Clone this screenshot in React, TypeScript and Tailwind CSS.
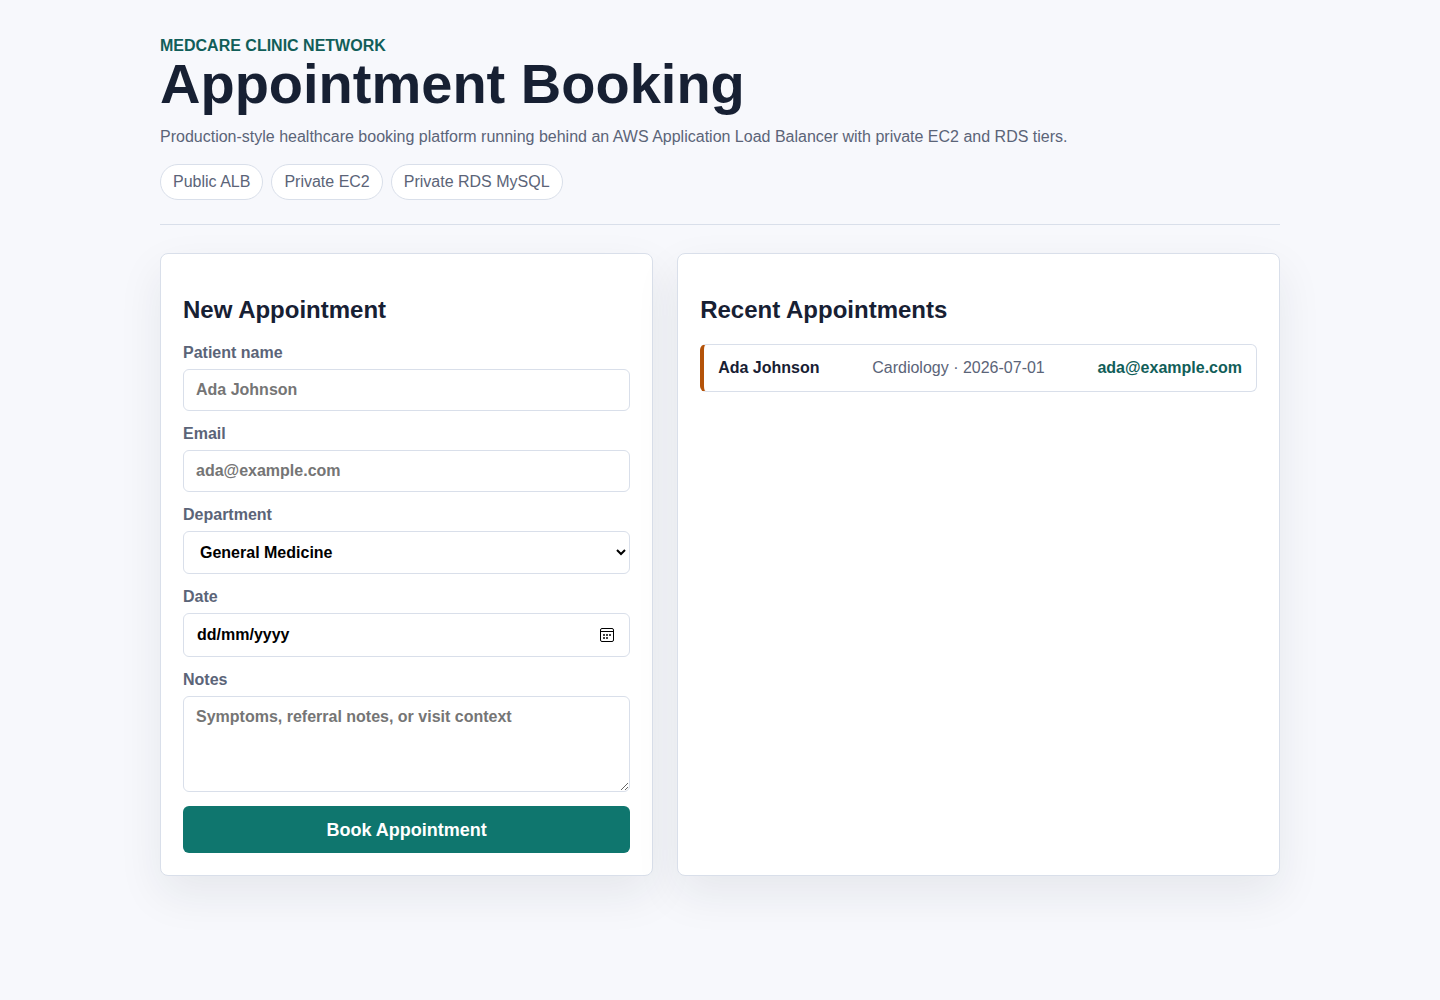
import React from 'react';

interface Appointment {
    name: string;
    department: string;
    date: string;
    email: string;
}

const tiers = ['Public ALB', 'Private EC2', 'Private RDS MySQL'];

const departments = ['General Medicine', 'Cardiology', 'Pediatrics', 'Dermatology'];

const appointments: Appointment[] = [
    { name: 'Ada Johnson', department: 'Cardiology', date: '2026-07-01', email: 'ada@example.com' },
];

const labelClass = 'grid gap-[7px] leading-[18px] font-bold text-[#5b6478]';
const fieldClass = 'w-full rounded-md border border-[#d9dfea] bg-white text-base font-bold text-black';
const cardClass = 'rounded-lg border border-[#d9dfea] bg-white p-[22px] shadow-[0_18px_45px_rgba(24,32,51,0.08)]';

function CalendarIcon() {
    return (
        <svg width="14" height="14" viewBox="0 0 14 14" fill="none" aria-hidden="true" shapeRendering="crispEdges">
            <rect x="0.5" y="0.5" width="13" height="13" rx="1.5" stroke="black" shapeRendering="auto" />
            <path d="M1 3.5h12" stroke="black" />
            <path d="M3 6h2v2H3zM6 6h2v2H6zM9 6h2v2H9zM3 9h2v2H3zM6 9h2v2H6z" fill="#444" />
        </svg>
    );
}

function AppointmentForm() {
    return (
        <section className={cardClass}>
            <h2 className="my-5 text-2xl leading-7 font-bold">New Appointment</h2>
            <form className="grid gap-[14px]" onSubmit={(e) => e.preventDefault()}>
                <label className={labelClass}>
                    Patient name
                    <input
                        type="text"
                        name="patient"
                        placeholder="Ada Johnson"
                        className={`${fieldClass} h-[42px] px-3 placeholder:text-[#757575]`}
                    />
                </label>
                <label className={labelClass}>
                    Email
                    <input
                        type="email"
                        name="email"
                        placeholder="ada@example.com"
                        className={`${fieldClass} h-[42px] px-3 placeholder:text-[#757575]`}
                    />
                </label>
                <label className={labelClass}>
                    Department
                    <select name="department" className={`${fieldClass} h-[43px] px-3`}>
                        {departments.map((department) => (
                            <option key={department}>{department}</option>
                        ))}
                    </select>
                </label>
                <div className={labelClass}>
                    <label htmlFor="date">Date</label>
                    <div className="relative">
                        <input
                            type="text"
                            id="date"
                            name="date"
                            inputMode="numeric"
                            placeholder="dd/mm/yyyy"
                            className={`${fieldClass} block h-11 pr-10 pl-[13px] placeholder:text-black`}
                        />
                        <button
                            type="button"
                            aria-label="Open calendar"
                            className="absolute inset-y-0 right-4 flex items-center"
                        >
                            <CalendarIcon />
                        </button>
                    </div>
                </div>
                <label className={labelClass}>
                    Notes
                    <textarea
                        name="notes"
                        placeholder="Symptoms, referral notes, or visit context"
                        className={`${fieldClass} block h-24 resize-y px-3 py-[11px] leading-[18px] placeholder:text-[#757575]`}
                    />
                </label>
                <button type="submit" className="h-[47px] rounded-md bg-[#0f766e] text-lg font-extrabold text-white">
                    Book Appointment
                </button>
            </form>
        </section>
    );
}

function RecentAppointments() {
    return (
        <section className={cardClass}>
            <h2 className="my-5 text-2xl leading-7 font-bold">Recent Appointments</h2>
            <div className="grid gap-3">
                {appointments.map((item) => (
                    <article
                        key={item.email}
                        className="flex items-center justify-between gap-3 rounded-md border border-l-4 border-[#d9dfea] border-l-[#b45309] p-[14px] leading-[18px]"
                    >
                        <strong>{item.name}</strong>
                        <span className="text-[#5b6478]">
                            {item.department} · {item.date}
                        </span>
                        <span className="font-bold text-[#115e59]">{item.email}</span>
                    </article>
                ))}
            </div>
        </section>
    );
}

export default function App() {
    return (
        <div className="min-h-screen bg-[#f7f8fc] font-['Liberation_Sans',Arial,sans-serif] text-base text-[#172033]">
            <main className="mx-auto max-w-[1184px] px-8 pt-[37px] pb-8">
                <header className="border-b border-[#d9dfea] pb-6">
                    <p className="leading-[18px] font-bold text-[#115e59] uppercase">MedCare Clinic Network</p>
                    <h1 className="text-[56px] leading-[58px] font-bold">Appointment Booking</h1>
                    <p className="mt-[15px] leading-[18px] text-[#5b6478]">
                        Production-style healthcare booking platform running behind an AWS Application Load Balancer with
                        private EC2 and RDS tiers.
                    </p>
                    <div className="mt-[18px] flex flex-wrap gap-2">
                        {tiers.map((tier) => (
                            <span
                                key={tier}
                                className="rounded-full border border-[#d9dfea] bg-white px-3 py-2 leading-[18px] text-[#5b6478]"
                            >
                                {tier}
                            </span>
                        ))}
                    </div>
                </header>
                <div className="mt-7 grid gap-6 lg:grid-cols-[9fr_11fr]">
                    <AppointmentForm />
                    <RecentAppointments />
                </div>
            </main>
        </div>
    );
}
